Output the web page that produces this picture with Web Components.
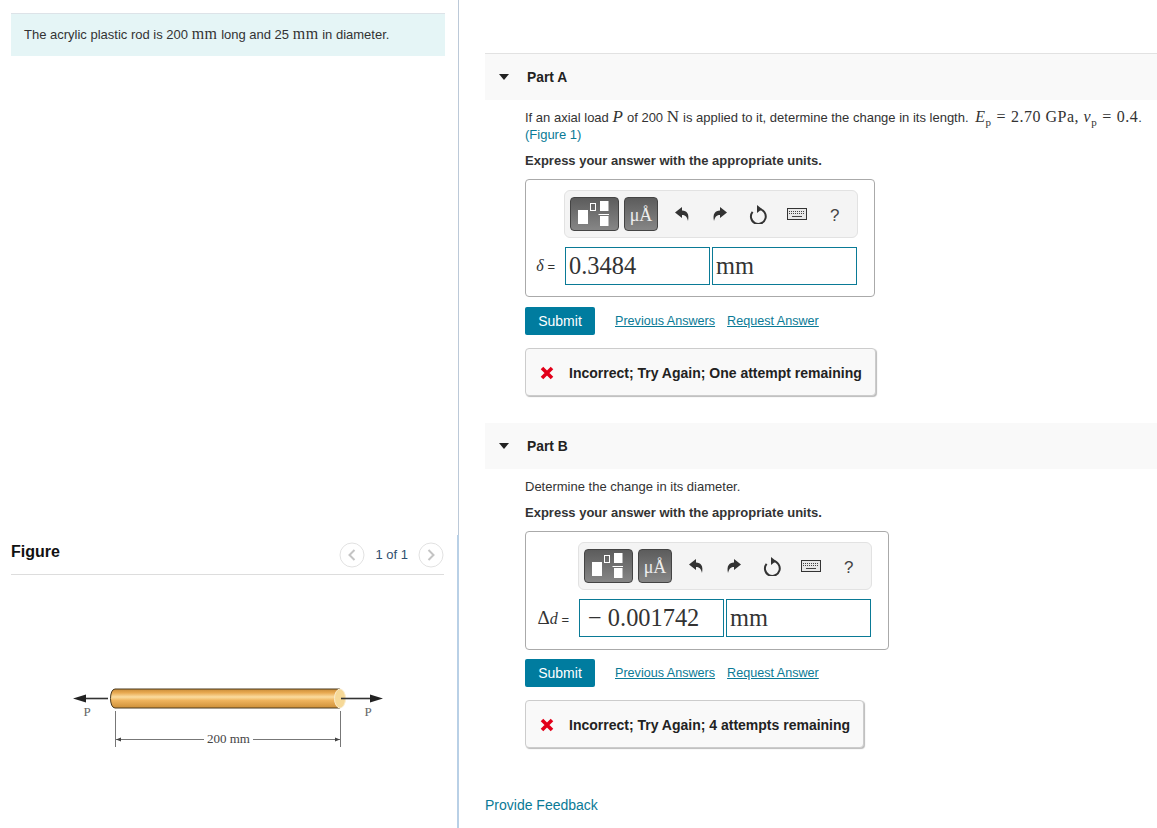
<!DOCTYPE html>
<html>
<head>
<meta charset="utf-8">
<title>Part</title>
<style>
    html, body { margin: 0; padding: 0; height: 100%; background: #fff; overflow: hidden; }
    body { font-family: "Liberation Sans", Arial, sans-serif; font-size: 13px; color: #333; }
    .m { font: 16px/0 "Liberation Serif", serif; letter-spacing: .5px; }
    .big { font-size: 17px; }
    i.m, .m i { font-style: italic; }
    .eq { margin: 0 5px; }
    sub { font-size: 11px; line-height: 0; }
</style>
</head>
<body>
<mp-page>
    <mp-intro slot="left">The acrylic plastic rod is 200 <span class="m">mm</span> long and 25 <span class="m">mm</span> in diameter.</mp-intro>
    <mp-figure slot="left"></mp-figure>

    <mp-part title="Part A" first>
        <p style="margin:0;line-height:17px;white-space:nowrap">If an axial load <i class="m big">P</i> of 200 <span class="m big">N</span> is applied to it, determine the change in its length. <span class="m" style="margin-left:3px"><i>E</i><sub>p</sub><span class="eq">=</span>2.70 GPa, <i>ν</i><sub>p</sub><span class="eq">=</span>0.4</span>.<br><span style="color:#0a7a96">(Figure 1)</span></p>
        <p style="margin:9px 0 10px;font-weight:bold;line-height:17px">Express your answer with the appropriate units.</p>
        <mp-answer label="δ" value="0.3484" unit="mm" pad="39"></mp-answer>
        <mp-actions></mp-actions>
        <mp-feedback>Incorrect; Try Again; One attempt remaining</mp-feedback>
    </mp-part>

    <mp-part title="Part B">
        <p style="margin:0;line-height:17px">Determine the change in its diameter.</p>
        <p style="margin:9px 0 10px;font-weight:bold;line-height:17px">Express your answer with the appropriate units.</p>
        <mp-answer label="Δd" value="−&#8197;0.001742" unit="mm" pad="53" style="padding-bottom:12px"></mp-answer>
        <mp-actions style="margin-top:9px"></mp-actions>
        <mp-feedback>Incorrect; Try Again; 4 attempts remaining</mp-feedback>
    </mp-part>

    <mp-link-foot>Provide Feedback</mp-link-foot>
</mp-page>

<script>
// page shell: left column, divider, right column
class MpPage extends HTMLElement {
    constructor() {
        super();
        this.attachShadow({ mode: 'open' });
        this.shadowRoot.innerHTML = `
            <style>
                :host { display: grid; grid-template-columns: 457px 2px 1fr; height: 828px; }
                .left { padding: 13px 12px 0 11px; box-sizing: border-box; }
                .bar { display: flex; flex-direction: column; }
                .top { height: 535px; width: 1px; margin-left: 1px; background: #bcc9d8; }
                .bottom { flex: 1; background: #b9d0e6; }
                .right { padding: 53px 0 0 26px; box-sizing: border-box; }
            </style>
            <div class="left"><slot name="left"></slot></div>
            <div class="bar"><div class="top"></div><div class="bottom"></div></div>
            <div class="right"><slot></slot></div>
        `;
    }
}

class MpIntro extends HTMLElement {
    constructor() {
        super();
        this.attachShadow({ mode: 'open' });
        this.shadowRoot.innerHTML = `
            <style>
                :host { display: block; background: #e5f5f6; border-top: 1px solid #dde3e8; height: 42px; line-height: 41px; padding-left: 13px; color: #333; }
            </style>
            <slot></slot>
        `;
    }
}

class MpFigure extends HTMLElement {
    constructor() {
        super();
        this.attachShadow({ mode: 'open' });
        this.shadowRoot.innerHTML = `
            <style>
                :host { display: block; margin-top: 482px; }
                .head { display: flex; align-items: center; height: 37px; margin-right: 1px; border-bottom: 1px solid #ddd; box-sizing: border-box; }
                h2 { margin: 0 auto 9px 0; font-size: 16px; font-weight: bold; color: #111; }
                .nav { display: flex; align-items: center; gap: 10px; margin-top: -3px; font-size: 13px; color: #2f4f6f; }
                svg { display: block; }
                .fig { margin-top: 95px; }
            </style>
            <div class="head">
                <h2>Figure</h2>
                <div class="nav">
                    <svg width="26" height="26" viewBox="0 0 26 26"><circle cx="13" cy="13" r="12" fill="#fff" stroke="#e2e2e2"/><path d="M15.5 8l-5 5 5 5" fill="none" stroke="#c4c4c4" stroke-width="2"/></svg>
                    <div>1 of 1</div>
                    <svg width="26" height="26" viewBox="0 0 26 26"><circle cx="13" cy="13" r="12" fill="#fff" stroke="#e2e2e2"/><path d="M10.5 8l5 5-5 5" fill="none" stroke="#c4c4c4" stroke-width="2"/></svg>
                </div>
            </div>
            <svg class="fig" width="434" height="90" viewBox="11 670 434 90">
                <defs>
                    <linearGradient id="rod" x1="0" y1="0" x2="0" y2="1">
                        <stop offset="0" stop-color="#c98c38"/>
                        <stop offset=".2" stop-color="#e9aa52"/>
                        <stop offset=".42" stop-color="#fbdca0"/>
                        <stop offset=".6" stop-color="#efb45e"/>
                        <stop offset="1" stop-color="#cd8f38"/>
                    </linearGradient>
                </defs>
                <path d="M115 689H340V708H115C109 708 109 689 115 689Z" fill="url(#rod)" stroke="#4a3a20" stroke-width="1"/>
                <ellipse cx="340" cy="698.5" rx="5.5" ry="9.5" fill="#f6d998" stroke="#fbeccb"/>
                <path d="M108 698.5H82" stroke="#333" stroke-width="1.6"/>
                <path d="M73 698.5L86 694.5V702.5Z" fill="#222"/>
                <path d="M341 698.5H373" stroke="#333" stroke-width="1.6"/>
                <path d="M383 698.5L370 694.5V702.5Z" fill="#222"/>
                <text x="87" y="716" text-anchor="middle" font-family="Liberation Serif" font-size="13" fill="#666">P</text>
                <text x="368" y="716" text-anchor="middle" font-family="Liberation Serif" font-size="13" fill="#666">P</text>
                <path d="M115.5 711V747M340.5 711V747" stroke="#777"/>
                <path d="M115 739.5H204M253 739.5H340" stroke="#777"/>
                <path d="M116 739.5l5-2v4ZM340 739.5l-5-2v4Z" fill="#444"/>
                <text x="228.5" y="743" text-anchor="middle" font-family="Liberation Serif" font-size="13" fill="#444">200 mm</text>
            </svg>
        `;
    }
}

class MpPart extends HTMLElement {
    constructor() {
        super();
        this.attachShadow({ mode: 'open' });
        const title = this.getAttribute('title');
        this.shadowRoot.innerHTML = `
            <style>
                :host { display: block; margin-bottom: 27px; }
                :host([first]) header { border-top: 1px solid #e2e2e2; }
                header { display: flex; align-items: center; height: 46px; background: #f9f9f9; font-weight: bold; font-size: 13.8px; color: #222; }
                .tri { width: 0; height: 0; border-left: 5.5px solid transparent; border-right: 5.5px solid transparent; border-top: 6px solid #222; margin: 0 18px 0 14px; }
                .body { padding: 9px 0 0 40px; }
            </style>
            <header><div class="tri"></div><span>${title}</span></header>
            <div class="body"><slot></slot></div>
        `;
    }
}

class MpToolbar extends HTMLElement {
    constructor() {
        super();
        this.attachShadow({ mode: 'open' });
        this.shadowRoot.innerHTML = `
            <style>
                :host { display: flex; align-items: center; width: 294px; height: 48px; box-sizing: border-box; background: #f4f4f4; border: 1px solid #e2e2e2; border-radius: 6px; padding-left: 5px; }
                .btn { height: 34px; box-sizing: border-box; border: 1px solid #444; border-radius: 4px; background: linear-gradient(#5c5c5c, #868686); display: flex; align-items: center; justify-content: center; }
                .tpl { width: 49px; margin-right: 5px; }
                .mu { width: 34px; padding-top: 2px; color: #eee; font: 18px "Liberation Serif", serif; }
                .ic { display: flex; justify-content: center; width: 38.2px; }
                .q { font-size: 17px; color: #444; margin-top: 3px; }
            </style>
            <div class="btn tpl">
                <svg width="33" height="26" viewBox="0 0 33 26">
                    <rect x="0" y="9" width="10" height="14" fill="#fff"/>
                    <rect x="12.5" y="2.5" width="5" height="7" fill="none" stroke="#fff"/>
                    <rect x="22" y="0" width="8.5" height="10" fill="#fff"/>
                    <rect x="20.5" y="13" width="10.5" height="1" fill="#fff"/>
                    <rect x="22" y="15" width="8.5" height="10" fill="#fff"/>
                </svg>
            </div>
            <div class="btn mu">μÅ</div>
            <div style="width:5px"></div>
            <div class="ic"><svg width="16" height="16" viewBox="0 0 16 16"><path d="M8 1L1 6.5 8 12V9c3 0 5 1.500 6 6 1.500-7-1-10.500-6-10.500Z" fill="#333"/></svg></div>
            <div class="ic"><svg width="16" height="16" viewBox="0 0 16 16"><path d="M8 1l7 5.5L8 12V9c-3 0-5 1.500-6 6C.5 8 3 4.500 8 4.500Z" fill="#333"/></svg></div>
            <div class="ic"><svg width="18" height="19" viewBox="0 0 18 19"><path d="M10 4.100A7.400 7.400 0 1 1 3.600 6.800" fill="none" stroke="#333" stroke-width="2"/><path d="M8 0v8l5-4Z" fill="#333"/></svg></div>
            <div class="ic"><svg width="20" height="12" viewBox="0 0 20 12"><rect x=".5" y=".5" width="19" height="11" fill="#e8e8e8" stroke="#333"/><path d="M2 3.500h16M2 5.500h16" stroke="#444" stroke-dasharray="1 1"/><path d="M5 8.500h10" stroke="#444"/></svg></div>
            <div class="ic q">?</div>
        `;
    }
}

class MpAnswer extends HTMLElement {
    constructor() {
        super();
        this.attachShadow({ mode: 'open' });
        const label = this.getAttribute('label');
        const pad = this.getAttribute('pad');
        const math = label.length > 1 ? `<span class="d">Δ</span><i>d</i>` : `<i>${label}</i>`;
        this.shadowRoot.innerHTML = `
            <style>
                :host { display: block; width: max-content; box-sizing: border-box; border: 1px solid #aaa; border-radius: 4px; padding: 10px 16px 11px 0; }
                mp-toolbar { margin-left: ${pad - 1}px; }
                .row { display: flex; align-items: center; margin-top: 9px; }
                .lab { width: ${pad}px; box-sizing: border-box; text-align: right; padding-right: 10px; white-space: nowrap; font-size: 13px; color: #333; }
                .lab i { font: italic 16px "Liberation Serif", serif; }
                .lab .d { font: 19px "Liberation Serif", serif; }
                .box { width: 145px; height: 38px; box-sizing: border-box; border: 1px solid #0a7a96; padding-left: ${label.length > 1 ? 8 : 3}px; font: 24.4px/35px "Liberation Serif", serif; color: #333; white-space: nowrap; }
                .unit { margin-left: 2px; padding-left: 3px; }
            </style>
            <mp-toolbar></mp-toolbar>
            <div class="row">
                <div class="lab">${math} =</div>
                <div class="box">${this.getAttribute('value')}</div>
                <div class="box unit">${this.getAttribute('unit')}</div>
            </div>
        `;
    }
}

class MpActions extends HTMLElement {
    constructor() {
        super();
        this.attachShadow({ mode: 'open' });
        this.shadowRoot.innerHTML = `
            <style>
                :host { display: flex; align-items: center; margin-top: 10px; font-size: 12.6px; }
                button { width: 70px; height: 28px; border: 0; border-radius: 2px; background: #007c9f; color: #fff; font: 14px "Liberation Sans", sans-serif; margin-right: 20px; }
                a { color: #0a7a96; text-decoration: underline; margin: 0 12px 1px 0; }
            </style>
            <button>Submit</button>
            <a>Previous Answers</a>
            <a>Request Answer</a>
        `;
    }
}

class MpFeedback extends HTMLElement {
    constructor() {
        super();
        this.attachShadow({ mode: 'open' });
        this.shadowRoot.innerHTML = `
            <style>
                :host { display: flex; align-items: center; width: max-content; height: 48px; box-sizing: border-box; margin-top: 13px; padding: 2px 13px 0 14px; background: #f9f9f9; border: 1px solid #ccc; border-radius: 4px; box-shadow: 1px 1px 1px #bbb; font-weight: bold; font-size: 14px; color: #222; }
                svg { margin-right: 15px; }
            </style>
            <svg width="14" height="14" viewBox="0 0 14 14"><path d="M2 2l10 10M12 2L2 12" stroke="#e2001a" stroke-width="3.6"/></svg>
            <slot></slot>
        `;
    }
}

class MpLinkFoot extends HTMLElement {
    constructor() {
        super();
        this.attachShadow({ mode: 'open' });
        this.shadowRoot.innerHTML = `
            <style>
                :host { display: block; margin-top: 49px; font-size: 14px; color: #0a7a96; }
            </style>
            <slot></slot>
        `;
    }
}

customElements.define('mp-page', MpPage);
customElements.define('mp-intro', MpIntro);
customElements.define('mp-figure', MpFigure);
customElements.define('mp-part', MpPart);
customElements.define('mp-toolbar', MpToolbar);
customElements.define('mp-answer', MpAnswer);
customElements.define('mp-actions', MpActions);
customElements.define('mp-feedback', MpFeedback);
customElements.define('mp-link-foot', MpLinkFoot);
</script>
</body>
</html>
